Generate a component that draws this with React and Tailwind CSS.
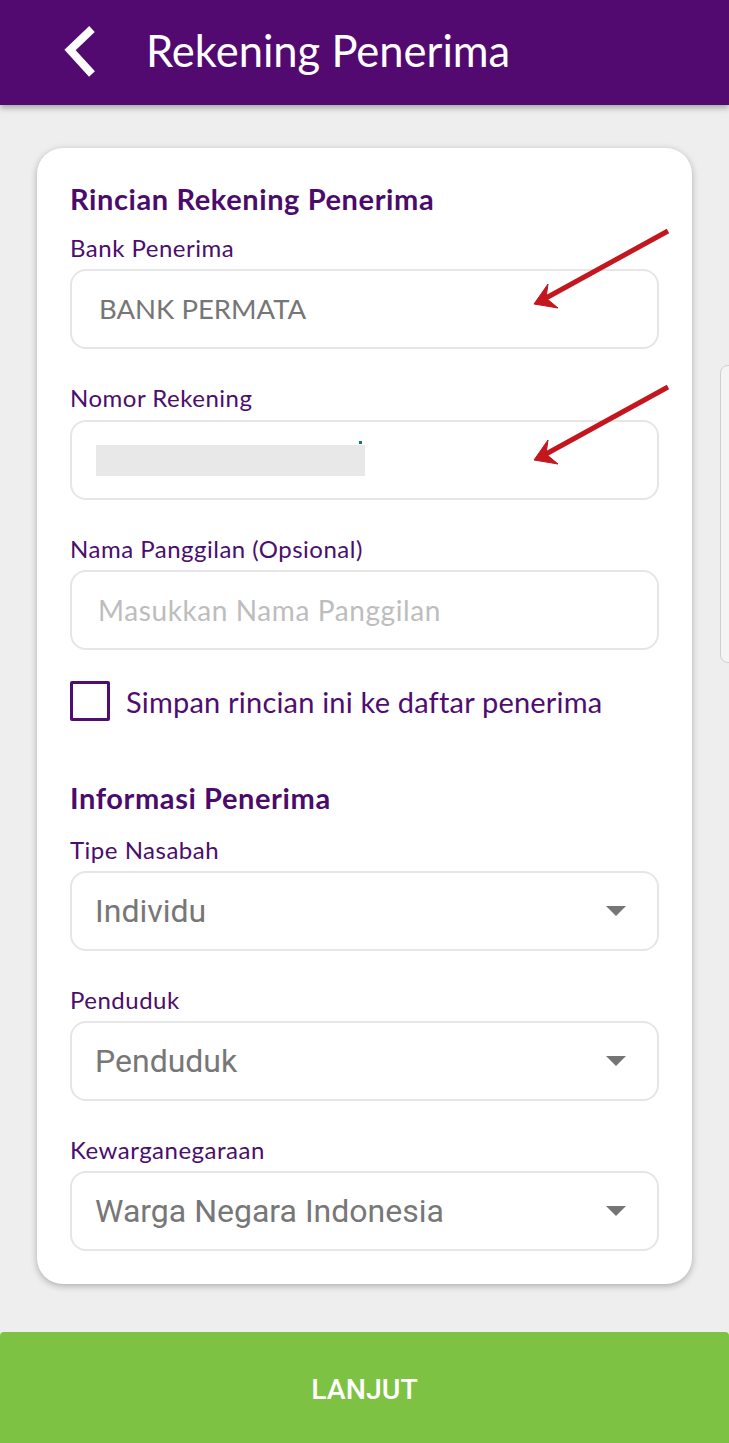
import React from "react";

const UB = { fontFamily: "Lato, 'Open Sans', sans-serif" };
const RB = { fontFamily: "Roboto, 'Liberation Sans', sans-serif" };

function Label({ children, className = "" }) {
  return (
    <div
      className={"h-[32px] flex items-center text-[24px] tracking-[0.5px] text-[#4a0e6c] " + className}
      style={UB}
    >
      {children}
    </div>
  );
}

function Box({ children, className = "" }) {
  return (
    <div
      className={
        "h-[80px] rounded-[16px] border-2 border-[#e6e6e6] bg-white flex items-center " +
        className
      }
    >
      {children}
    </div>
  );
}

function Select({ value }) {
  return (
    <Box className="mt-[5px] pl-[23px] pr-[31px] justify-between">
      <span className="text-[32px] text-[#777777]" style={RB}>
        {value}
      </span>
      <svg width="20" height="10" viewBox="0 0 20 10">
        <polygon points="0,0 20,0 10,10" fill="#757575" />
      </svg>
    </Box>
  );
}

export default function App() {
  return (
    <div className="relative w-[729px] min-h-[1443px] bg-[#eeeeee] flex flex-col overflow-hidden">
      <header className="relative z-10 h-[105px] bg-[#520a71] shadow-[0_3px_6px_rgba(0,0,0,0.3)] flex items-center">
        <svg width="40" height="56" viewBox="0 0 40 56" className="ml-[60px]">
          <polyline
            points="32,4 10,25 32,49"
            fill="none"
            stroke="white"
            strokeWidth="8"
            strokeLinejoin="miter"
          />
        </svg>
        <h1 className="ml-[46px] text-[43.5px] text-white leading-none -mt-[4px]" style={UB}>
          Rekening Penerima
        </h1>
      </header>

      <main className="px-[37px] pt-[43px]">
        <div className="rounded-[26px] bg-white shadow-[0_2px_7px_rgba(0,0,0,0.28)] px-[33px] pt-[36px] pb-[33px]">
          <div className="h-[30px] flex items-center text-[29px] tracking-[0.6px] font-bold text-[#4a0b6b]" style={UB}>
            Rincian Rekening Penerima
          </div>
          <Label className="mt-[18px]">Bank Penerima</Label>
          <Box className="mt-[5px] pl-[27px]">
            <span className="text-[27.5px] text-[#767676]" style={UB}>
              BANK PERMATA
            </span>
          </Box>

          <Label className="mt-[33px]">Nomor Rekening</Label>
          <Box className="mt-[6px] pl-[24px]">
            <div className="relative">
              <div className="w-[269px] h-[31px] bg-[#e8e8e8]" />
              <div className="absolute right-[3px] -top-[4px] w-[3px] h-[3px] bg-[#0f7a68]" />
            </div>
          </Box>

          <Label className="mt-[33px]">Nama Panggilan (Opsional)</Label>
          <Box className="mt-[5px] pl-[26px]">
            <span className="text-[28px] tracking-[0.6px] text-[#bdbdbd]" style={UB}>
              Masukkan Nama Panggilan
            </span>
          </Box>

          <div className="mt-[31px] h-[40px] flex items-center gap-[16px]">
            <div className="w-[40px] h-[40px] border-[3px] border-[#4f0d70] rounded-[2px]" />
            <span className="text-[29px] leading-none tracking-[0.2px] text-[#4f0d70]" style={UB}>
              Simpan rincian ini ke daftar penerima
            </span>
          </div>

          <div className="mt-[61px] h-[32px] flex items-center text-[29px] tracking-[0.6px] font-bold text-[#4a0b6b]" style={UB}>
            Informasi Penerima
          </div>
          <Label className="mt-[20px]">Tipe Nasabah</Label>
          <Select value="Individu" />

          <Label className="mt-[33px]">Penduduk</Label>
          <Select value="Penduduk" />

          <Label className="mt-[33px]">Kewarganegaraan</Label>
          <Select value="Warga Negara Indonesia" />
        </div>
      </main>

      <button
        className="mt-[48px] h-[111px] w-full bg-[#7dc242] rounded-t-[4px] pt-[5px] text-white text-[28.5px] font-medium"
        style={RB}
      >
        LANJUT
      </button>

      <div className="absolute left-[720px] top-[365px] w-[20px] h-[298px] rounded-l-[8px] border border-[#cfcfcf] bg-[#f4f4f4]" />

      <svg
        className="absolute left-0 top-0 pointer-events-none"
        width="729"
        height="1443"
        viewBox="0 0 729 1443"
      >
        <g fill="#c3161f" stroke="#c3161f">
          <line x1="668" y1="231" x2="546" y2="298" strokeWidth="5" />
          <polygon points="534,304 548,284 546,298 558,308" strokeWidth="1" />
          <line x1="668" y1="387" x2="546" y2="454" strokeWidth="5" />
          <polygon points="534,460 548,440 546,454 558,464" strokeWidth="1" />
        </g>
      </svg>
    </div>
  );
}
